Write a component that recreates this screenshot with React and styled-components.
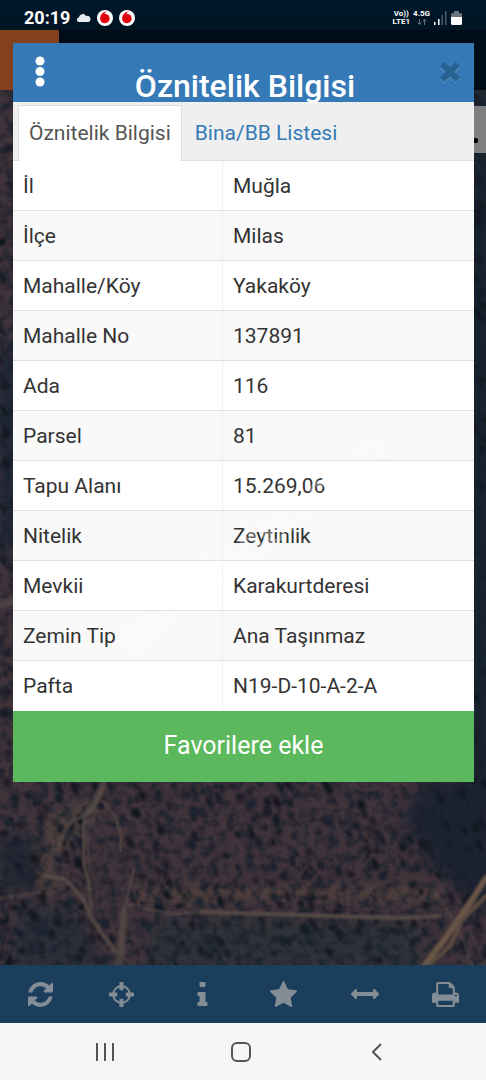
import React from 'react';
import styled, { createGlobalStyle } from 'styled-components';

const GlobalStyle = createGlobalStyle`
  * { box-sizing: border-box; }
  body {
    margin: 0;
    background: #14121a;
    font-family: Roboto, "Noto Sans", sans-serif;
    color: #333;
  }
  button { font-family: inherit; border: none; padding: 0; background: none; cursor: pointer; }
`;

const Screen = styled.div`
  min-height: 100vh;
  display: flex;
  flex-direction: column;
`;

/* ===== STATUS BAR ===== */
const StatusBar = styled.div`
  height: 30px;
  padding: 5px 24px 0;
  display: flex;
  align-items: center;
  justify-content: space-between;
  background: linear-gradient(#00182c, #001422);
  color: #fff;
`;

const StatusGroup = styled.div`
  display: flex;
  align-items: center;
  gap: ${p => p.$gap}px;
`;

const Clock = styled.span`
  font-size: 18px;
  line-height: 20px;
  font-weight: 700;
`;

const Network = styled.span`
  display: flex;
  flex-direction: column;
  align-items: center;
  font-size: 8px;
  line-height: 8px;
  font-weight: 700;
`;

/* ===== MAP STAGE ===== */
const Stage = styled.div`
  flex: 1;
  display: grid;
`;

const Backdrop = styled.div`
  grid-area: 1 / 1;
  display: flex;
  flex-direction: column;
`;

const AppBar = styled.div`
  height: 60px;
  background: #000d18;
`;

const AppBadge = styled.div`
  width: 59px;
  height: 100%;
  background: #84401c;
`;

const MapBox = styled.div`
  flex: 1 0 0;
  min-height: 0;
  overflow: hidden;

  svg { display: block; width: 100%; height: 100%; }
`;

/* ===== DIALOG ===== */
const Dialog = styled.section`
  grid-area: 1 / 1;
  align-self: start;
  z-index: 1;
  position: relative;
  margin: 13px 12px 0 13px;
  background: #fff;
`;

const DialogHead = styled.header`
  height: 59px;
  padding: 0 12px 0 15px;
  display: grid;
  grid-template-columns: 24px 1fr 24px;
  background: #357ab7;
`;

const HeadBtn = styled.button`
  height: 58px;
  display: flex;
  align-items: center;
  justify-content: center;
`;

const DialogTitle = styled.h1`
  margin: 24px 0 0;
  font-size: 32px;
  line-height: 38px;
  font-weight: 500;
  text-align: center;
  color: #fff;
  white-space: nowrap;
`;

const Tabs = styled.div`
  height: 59px;
  padding: 3px 5px 0;
  display: flex;
  background: #efefef;
  border-bottom: 1px solid #ddd;
`;

const Tab = styled.button`
  height: 56px;
  padding: 0 10px 2px;
  border: 1px solid ${p => p.$active ? '#ddd' : 'transparent'};
  border-bottom: none;
  background: ${p => p.$active ? '#fff' : 'transparent'};
  color: ${p => p.$active ? '#555' : '#337ab7'};
  font-size: 21px;
  line-height: 28px;
  white-space: nowrap;
  margin-right: 2px;
`;

const Table = styled.table`
  width: 100%;
  border-collapse: separate;
  border-spacing: 0;
  table-layout: fixed;
`;

const Row = styled.tr`
  background: ${p => p.$striped ? '#f9f9f9' : '#fff'};

  th, td {
    height: 50px;
    padding: 0 9px 0 10px;
    border-bottom: 1px solid #ddd;
    font-size: 21px;
    line-height: 28px;
    font-weight: 400;
    text-align: left;
  }
  th { width: 210px; border-right: 1px solid #eee; }
  &:last-child th, &:last-child td { border-bottom-color: #fff; }
`;

const FavoriteBtn = styled.button`
  display: block;
  width: 100%;
  height: 71px;
  padding-bottom: 2px;
  background: #5cb85c;
  color: #fff;
  font-size: 25px;
  line-height: 32px;
`;

const Watermark = styled.span`
  position: absolute;
  top: 500px;
  left: 238px;
  transform: translate(-50%, -50%) rotate(-38deg);
  font-size: 46px;
  line-height: 48px;
  font-weight: 500;
  color: rgba(255, 255, 255, 0.3);
  pointer-events: none;
`;

/* ===== BOTTOM BARS ===== */
const Toolbar = styled.nav`
  height: 58px;
  display: grid;
  grid-template-columns: repeat(6, 1fr);
  background: #1b3e5c;
`;

const ToolBtn = styled.button`
  display: flex;
  align-items: center;
  justify-content: center;
  color: #838d95;
`;

const NavBar = styled.nav`
  height: 57px;
  padding: 0 41px 0 37px;
  display: grid;
  grid-template-columns: repeat(3, 1fr);
  background: #f6f6f6;
`;

const attributes = [
  ['İl', 'Muğla'],
  ['İlçe', 'Milas'],
  ['Mahalle/Köy', 'Yakaköy'],
  ['Mahalle No', '137891'],
  ['Ada', '116'],
  ['Parsel', '81'],
  ['Tapu Alanı', '15.269,06'],
  ['Nitelik', 'Zeytinlik'],
  ['Mevkii', 'Karakurtderesi'],
  ['Zemin Tip', 'Ana Taşınmaz'],
  ['Pafta', 'N19-D-10-A-2-A'],
];

const tools = [
  {
    label: 'Yenile', w: 25, h: 25, box: '0 0 1536 1536',
    d: 'M1511 928q0 5-1 7-64 268-268 434.5T764 1536q-146 0-282.5-55T238 1324l-129 129q-19 19-45 19t-45-19-19-45V960q0-26 19-45t45-19h448q26 0 45 19t19 45-19 45l-137 137q71 66 161 102t187 36q134 0 250-65t186-179q11-17 53-117 8-23 30-23h192q13 0 22.5 9.5t9.5 22.5zm25-800v448q0 26-19 45t-45 19h-448q-26 0-45-19t-19-45 19-45l138-138Q969 256 768 256q-134 0-250 65T332 500q-11 17-53 117-8 23-30 23H50q-13 0-22.5-9.5T18 608v-7q65-268 270-434.5T768 0q146 0 284 55.5T1297 212l130-129q19-19 45-19t45 19 19 45z',
  },
  {
    label: 'Konum', w: 25, h: 25, box: '0 0 1536 1536',
    d: 'M1197 896h-109q-26 0-45-19t-19-45V704q0-26 19-45t45-19h109q-32-108-112.5-188.5T896 339v109q0 26-19 45t-45 19H704q-26 0-45-19t-19-45V339q-108 32-188.5 112.5T339 640h109q26 0 45 19t19 45v128q0 26-19 45t-45 19H339q32 108 112.5 188.5T640 1197v-109q0-26 19-45t45-19h128q26 0 45 19t19 45v109q108-32 188.5-112.5T1197 896zm339-192v128q0 26-19 45t-45 19h-143q-37 161-154.5 278.5T896 1329v143q0 26-19 45t-45 19H704q-26 0-45-19t-19-45v-143q-161-37-278.5-154.5T207 896H64q-26 0-45-19t-19-45V704q0-26 19-45t45-19h143q37-161 154.5-278.5T640 207V64q0-26 19-45t45-19h128q26 0 45 19t19 45v143q161 37 278.5 154.5T1329 640h143q26 0 45 19t19 45z',
  },
  {
    label: 'Bilgi', w: 11, h: 24, box: '0 0 640 1536',
    d: 'M640 1344v128q0 26-19 45t-45 19H64q-26 0-45-19t-19-45v-128q0-26 19-45t45-19h64V896H64q-26 0-45-19t-19-45V704q0-26 19-45t45-19h384q26 0 45 19t19 45v576h64q26 0 45 19t19 45zM512 64v192q0 26-19 45t-45 19H192q-26 0-45-19t-19-45V64q0-26 19-45t45-19h256q26 0 45 19t19 45z',
  },
  {
    label: 'Favoriler', w: 27, h: 26, box: '0 0 1664 1587',
    d: 'M1664 615q0 22-26 48l-363 354 86 500q1 7 1 20 0 21-10.5 35.5T1321 1587q-19 0-40-12l-449-236-449 236q-22 12-40 12-21 0-31.5-14.5T301 1537q0-6 2-20l86-500L25 663Q0 636 0 615q0-37 56-46l502-73L783 41q19-41 49-41t49 41l225 455 502 73q56 9 56 46z',
  },
  {
    label: 'Ölç', w: 28, h: 10, box: '0 320 1792 640',
    d: 'M1792 640q0 26-19 45l-256 256q-19 19-45 19t-45-19-19-45V768H384v128q0 26-19 45t-45 19-45-19L19 685q-19-19-19-45t19-45l256-256q19-19 45-19t45 19 19 45v128h1024V384q0-26 19-45t45-19 45 19l256 256q19 19 19 45z',
  },
  {
    label: 'Yazdır', w: 27, h: 25, box: '0 0 1664 1536',
    d: 'M384 1408h896v-256H384v256zm0-640h896V384h-160q-40 0-68-28t-28-68V128H384v640zm1152 64q0-26-19-45t-45-19-45 19-19 45 19 45 45 19 45-19 19-45zm128 0v416q0 13-9.5 22.5t-22.5 9.5h-224v160q0 40-28 68t-68 28H352q-40 0-68-28t-28-68v-160H32q-13 0-22.5-9.5T0 1248V832q0-79 56.5-135.5T192 640h64V96q0-40 28-68t68-28h672q40 0 88 20t76 48l152 152q28 28 48 76t20 88v256h64q79 0 135.5 56.5T1664 832z',
  },
];

// small seeded generator so that the trees stay in place between renders
function makeTrees(count) {
  let seed = 4177;
  const rnd = () => {
    seed = (seed * 16807) % 2147483647;
    return seed / 2147483647;
  };
  const trees = [];
  for (let i = 0; i < count; i++) {
    const y = 90 + rnd() * 875;
    trees.push({
      x: rnd() * 486,
      y,
      rx: 1 + rnd() * 3,
      ry: 2 + rnd() * 4,
      fill: ['#12161f', '#171d2a', '#1b2532', '#10141d'][Math.floor(rnd() * 4)],
      o: 0.5 + rnd() * 0.5,
    });
  }
  return trees;
}

const trees = makeTrees(2300);

function AerialMap() {
  return (
    <svg viewBox="0 90 486 875" preserveAspectRatio="xMidYMax slice" aria-hidden="true">
      <defs>
        <filter id="grain" x="0" y="0" width="100%" height="100%" colorInterpolationFilters="sRGB">
          <feTurbulence type="fractalNoise" baseFrequency="0.11" numOctaves="3" seed="8" />
          <feColorMatrix values="0 0 0 0 0.09  0 0 0 0 0.12  0 0 0 0 0.17  2 0 0 0 -0.8" />
        </filter>
        <filter id="soft"><feGaussianBlur stdDeviation="0.8" /></filter>
        <filter id="wide" x="-30%" y="-30%" width="160%" height="160%"><feGaussianBlur stdDeviation="7" /></filter>
      </defs>
      <rect y="90" width="486" height="875" fill="#40333a" />
      <g filter="url(#wide)">
        <path d="M428 780h67v130l-28-8-32-35-30-50z" fill="#1a2330" />
        <path d="M465 90h30v690h-30z" fill="#12212d" />
        <path d="M0 350h20v200H0z" fill="#1a2834" />
        <path d="M150 920h270v50H150z" fill="#2d3138" />
        <path d="M130 888h310v12H130z" fill="#54423c" />
        <path d="M45 820l50-28 8 20-40 40-10 50-12-10z" fill="#4e3f3c" />
        <path d="M0 835h35v55H0z" fill="#202733" />
        <path d="M20 905l50 5 35 55H10z" fill="#2b2d37" />
      </g>
      <rect y="90" width="486" height="875" filter="url(#grain)" />
      <g filter="url(#soft)">
        {trees.map((t, i) => (
          <ellipse
            key={i}
            cx={t.x}
            cy={t.y}
            rx={t.rx}
            ry={t.ry}
            fill={t.fill}
            opacity={t.o}
            transform={`rotate(-25 ${t.x} ${t.y})`}
          />
        ))}
        <g fill="none" stroke="#5c4f49" strokeLinecap="round" strokeLinejoin="round">
          <path d="M104 780l-5 18-12 16-16 8-8 12-4 14" strokeWidth="3" opacity="0.7" />
          <path d="M103 786l-11 22-8 8" strokeWidth="7" opacity="0.5" />
          <path d="M84 820v45l5 20 3 25" strokeWidth="2" />
          <path d="M88 820v40l3 45" strokeWidth="1" />
          <path d="M104 802l12 16 5 16v18" strokeWidth="2" opacity="0.8" />
          <path d="M134 868l-5 22-5 20-3 40" strokeWidth="2" opacity="0.8" />
          <path d="M45 876l20 3 18 20 10 22 22 30" strokeWidth="4" opacity="0.8" />
          <path d="M0 898l38-5" strokeWidth="3" opacity="0.5" />
          <path d="M124 912l-2 30-4 25" strokeWidth="8" opacity="0.6" />
          <path d="M128 906q8-4 14 2l30 6 30-2" strokeWidth="2" opacity="0.7" />
          <path d="M202 912l70 2 60 2 70 2 38-2" strokeWidth="4" opacity="0.85" />
          <path d="M486 878l-14 22-14 20-14 20-20 26" stroke="#6a5746" strokeWidth="6" />
          <path d="M486 896l-24 24-12 26-22 20" stroke="#5b4c40" strokeWidth="4" />
          <path d="M432 888l18 26 14 28 8 24" strokeWidth="3" opacity="0.5" />
          <path d="M0 604l14-3" strokeWidth="9" opacity="0.5" />
        </g>
      </g>
      <rect x="466" y="106" width="20" height="47" fill="#7f7f7f" />
      <rect x="470" y="138" width="8" height="5" rx="2" fill="#000" />
    </svg>
  );
}

function OperatorMark() {
  return (
    <svg width="16" height="16" viewBox="0 0 16 16" aria-hidden="true">
      <circle cx="8" cy="8" r="8" fill="#fff" />
      <path d="M10.500 1.200C8.800 1.500 7.600 2.800 7.700 4.200A4.500 4.500 0 1 1 3.300 8C3.300 4.600 6.200 1.400 10.500 1.200Z" fill="#e10510" />
      <circle cx="8" cy="8.500" r="4.600" fill="#e10510" />
    </svg>
  );
}

export default function App() {
  return (
    <Screen>
      <GlobalStyle />
      <StatusBar>
        <StatusGroup $gap={6}>
          <Clock>20:19</Clock>
          <svg width="15" height="9" viewBox="0 0 16 10" aria-hidden="true">
            <path d="M2.500 10a2.500 2.500 0 0 1 .4-4.900A4.300 4.300 0 0 1 11 3.500 3.300 3.300 0 0 1 13.500 10z" fill="#e8ecef" />
          </svg>
          <OperatorMark />
          <OperatorMark />
        </StatusGroup>
        <StatusGroup $gap={4}>
          <StatusGroup $gap={3}>
            <Network><span>Vo))</span><span>LTE1</span></Network>
            <Network>
              <span>4.5G</span>
              <svg width="10" height="8" viewBox="0 0 10 8" fill="none" stroke="#66747f" aria-hidden="true">
                <path d="M2.500 1v5.500M.5 4.500l2 2 2-2M7.500 7V1.500M5.500 3.500l2-2 2 2" />
              </svg>
            </Network>
          </StatusGroup>
          <svg width="13" height="14" viewBox="0 0 13 14" aria-hidden="true">
            <path d="M0 11h1.500v3H0zM4 8h1.500v6H4z" fill="#fff" />
            <path d="M7.500 4H9v10H7.500zM11 0h1.500v14H11z" fill="#4d5b67" />
          </svg>
          <svg width="11" height="14" viewBox="0 0 11 14" aria-hidden="true">
            <path d="M3 0h5v2h1.500Q11 2 11 3.500V7H0V3.500Q0 2 1.500 2H3z" fill="#69757f" />
            <path d="M0 6h11v6.500q0 1.500-1.500 1.500h-8Q0 14 0 12.500z" fill="#fff" />
          </svg>
        </StatusGroup>
      </StatusBar>

      <Stage>
        <Backdrop>
          <AppBar><AppBadge /></AppBar>
          <MapBox><AerialMap /></MapBox>
        </Backdrop>

        <Dialog role="dialog" aria-labelledby="dialog-title">
          <DialogHead>
            <HeadBtn aria-label="Menü">
              <svg width="10" height="32" viewBox="0 0 10 32" fill="#fff">
                <circle cx="5" cy="5" r="4.500" />
                <circle cx="5" cy="15.500" r="4.500" />
                <circle cx="5" cy="26" r="4.500" />
              </svg>
            </HeadBtn>
            <DialogTitle id="dialog-title">Öznitelik Bilgisi</DialogTitle>
            <HeadBtn aria-label="Kapat">
              <svg width="22" height="23" viewBox="0 0 22 23" strokeWidth="6.500">
                <path d="M3 4l16 16M19 4L3 20" stroke="#5f9bcb" />
                <path d="M3 3l16 16M19 3L3 19" stroke="#2a6293" />
              </svg>
            </HeadBtn>
          </DialogHead>
          <Tabs role="tablist">
            <Tab role="tab" aria-selected="true" $active>Öznitelik Bilgisi</Tab>
            <Tab role="tab" aria-selected="false">Bina/BB Listesi</Tab>
          </Tabs>
          <Table>
            <tbody>
              {attributes.map(([name, value], i) => (
                <Row key={name} $striped={i % 2 === 1}>
                  <th scope="row">{name}</th>
                  <td>{value}</td>
                </Row>
              ))}
            </tbody>
          </Table>
          <FavoriteBtn>Favorilere ekle</FavoriteBtn>
          <Watermark aria-hidden="true">sahibinden.com</Watermark>
        </Dialog>
      </Stage>

      <Toolbar>
        {tools.map(t => (
          <ToolBtn key={t.label} aria-label={t.label}>
            <svg width={t.w} height={t.h} viewBox={t.box} fill="currentColor"><path d={t.d} /></svg>
          </ToolBtn>
        ))}
      </Toolbar>
      <NavBar>
        <HeadBtn aria-label="Son uygulamalar">
          <svg width="18" height="18" viewBox="0 0 18 18" stroke="#555" strokeWidth="2">
            <path d="M1 0v18M9 0v18M17 0v18" />
          </svg>
        </HeadBtn>
        <HeadBtn aria-label="Ana ekran">
          <svg width="20" height="20" viewBox="0 0 20 20" fill="none" stroke="#555" strokeWidth="2">
            <rect x="1" y="1" width="18" height="18" rx="5" />
          </svg>
        </HeadBtn>
        <HeadBtn aria-label="Geri">
          <svg width="10" height="18" viewBox="0 0 10 18" fill="none" stroke="#555" strokeWidth="2">
            <path d="M9 1L1 9l8 8" />
          </svg>
        </HeadBtn>
      </NavBar>
    </Screen>
  );
}
